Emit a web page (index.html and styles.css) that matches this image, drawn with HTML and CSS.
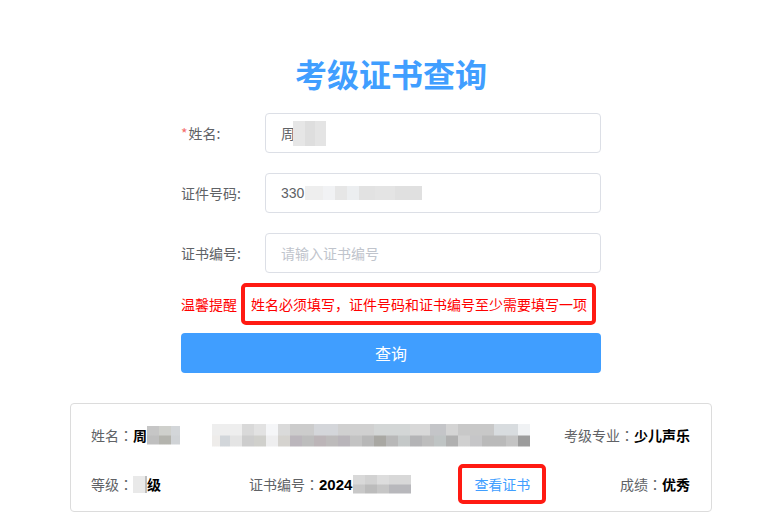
FILE: index.html
```html
<!DOCTYPE html>
<html lang="zh">
<head>
<meta charset="utf-8">
<link rel="stylesheet" href="styles.css">
</head>
<body>
<div class="page">
  <h1 class="title">考级证书查询</h1>
  <div class="form">
    <div class="row">
      <label class="label"><span class="req">*</span>姓名:</label>
      <div class="input"><span class="val">周</span><span class="mask mask-name"></span></div>
    </div>
    <div class="row">
      <label class="label">证件号码:</label>
      <div class="input"><span class="val">330</span><span class="mask mask-id"></span></div>
    </div>
    <div class="row">
      <label class="label">证书编号:</label>
      <div class="input"><span class="ph">请输入证书编号</span></div>
    </div>
    <div class="notice">
      <span class="notice-title">温馨提醒</span>
      <span class="notice-box">姓名必须填写，证件号码和证书编号至少需要填写一项</span>
    </div>
    <button class="btn">查询</button>
  </div>
  <div class="card">
    <div class="card-row r1">
      <div class="item"><span class="k">姓名<span class="colon" lang="zh-TW">：</span></span><b class="v">周</b><span class="mask mask-cname"></span></div>
      <span class="mask mask-long"></span>
      <div class="item push"><span class="k">考级专业<span class="colon" lang="zh-TW">：</span></span><b class="v">少儿声乐</b></div>
    </div>
    <div class="card-row r2">
      <div class="item"><span class="k">等级<span class="colon" lang="zh-TW">：</span></span><span class="mask mask-level"></span><b class="v">级</b></div>
      <div class="item cert"><span class="k">证书编号<span class="colon" lang="zh-TW">：</span></span><b class="v">2024</b><span class="mask mask-cert"></span></div>
      <a class="link">查看证书</a>
      <div class="item push"><span class="k">成绩<span class="colon" lang="zh-TW">：</span></span><b class="v">优秀</b></div>
    </div>
  </div>
</div>
</body>
</html>
```
FILE: styles.css
```css
* { box-sizing: border-box; }
html, body { margin: 0; padding: 0; background: #fff; }
body {
  font-family: "Noto Sans CJK SC", "Liberation Sans", sans-serif;
  font-size: 14px;
  color: #606266;
}
.page {
  padding-left: 18px;
  display: flex;
  flex-direction: column;
  align-items: center;
}
.title {
  margin: 52px 0 0;
  height: 48px;
  line-height: 42px;
  font-size: 32px;
  font-weight: 700;
  color: #409eff;
}
.form {
  width: 420px;
  margin-top: 13px;
  display: flex;
  flex-direction: column;
}
.row {
  display: flex;
  align-items: center;
  height: 40px;
  margin-bottom: 20px;
}
.label {
  width: 84px;
  color: #606266;
  font-size: 14px;
}
.req { color: #f56c6c; margin-right: 1px; }
.input {
  width: 336px;
  height: 40px;
  border: 1px solid #dcdfe6;
  border-radius: 4px;
  padding: 0 15px;
  display: flex;
  align-items: center;
  color: #606266;
  font-family: "Liberation Sans", "Noto Sans CJK SC", sans-serif;
}
.ph { color: #c0c4cc; font-family: "Noto Sans CJK SC", sans-serif; }
.mask { display: inline-block; }
.mask-name {
  width: 33px; height: 25px; margin-left: -2px;
  background: linear-gradient(to right, #e6e6e6 0 12px, #dedede 12px 22px, #e4e4e4 22px);
}
.mask-id {
  width: 117px; height: 14px; margin-left: 1px;
  background: linear-gradient(to right, #eeeeee 0 18px, #f1f2f4 18px 30px, #e6e6e6 30px 42px, #eceef0 42px 54px, #e2e2e2 54px 70px, #e4e4e4 70px 90px, #e0e0e0 90px);
}
.notice {
  display: flex;
  align-items: center;
  margin-top: -10px;
  height: 42px;
}
.notice-title {
  color: #f00;
  width: 60px;
  font-size: 14px;
}
.notice-box {
  height: 42px;
  width: 355px;
  border: 4px solid #ff1a12;
  border-radius: 5px;
  color: #f00;
  padding-left: 6px;
  display: flex;
  align-items: center;
  white-space: nowrap;
  font-size: 14px;
}
.btn {
  margin-top: 8px;
  width: 420px;
  height: 40px;
  border: none;
  border-radius: 4px;
  background: #409eff;
  color: #fff;
  font-family: "Noto Sans CJK SC", sans-serif;
  font-size: 16px;
  padding: 0;
}
.card {
  margin-top: 30px;
  width: 642px;
  height: 109px;
  border: 1px solid #dcdcdc;
  border-radius: 4px;
  padding: 20px 21px 8px 20px;
  display: flex;
  flex-direction: column;
}
.card-row {
  display: flex;
  align-items: center;
}
.r1 { height: 22px; }
.r2 { height: 40px; margin-top: 18px; }
.item { display: flex; align-items: center; white-space: nowrap; }
.k { color: #606266; }
.colon { font-family: "Noto Sans CJK TC", sans-serif; }
.v { color: #000; font-weight: 700; font-family: "Noto Sans CJK SC", "Liberation Sans", sans-serif; }
.cert .v { font-family: "Liberation Sans", sans-serif; font-size: 15px; }
.push { margin-left: auto; }
.mask-cname {
  width: 33px; height: 19px;
  background:
    linear-gradient(to right, #c6c6c6 0 12px, #cfd0cc 12px 24px, #d3d6d9 24px) top / 100% 50% no-repeat,
    linear-gradient(to right, #bfbfbf 0 12px, #b4b4ae 12px 24px, #d0d3d6 24px) bottom / 100% 50% no-repeat;
}
.mask-long {
  width: 318px; height: 23px; margin-left: 32px;
  background:
    linear-gradient(to right, #eeeeee 0 30px, #d9d9d9 30px 42px, #e2e2e2 42px 54px, #f5f6f8 54px 66px, #dadada 66px 78px, #cccccc 78px 102px, #d4d6da 102px 126px, #d0d0d0 126px 162px, #d3d6d6 162px 198px, #d8d8d8 198px 218px, #c4c5c8 218px 234px, #d4d4d4 234px 246px, #c8c8c8 246px 282px, #d8dcdf 282px 306px, #f0f2f4 306px) top / 100% 50% no-repeat,
    linear-gradient(to right, #eeecea 0 8px, #d2d6da 8px 18px, #e4e4e4 18px 30px, #cdcdcd 30px 42px, #d0d0cc 42px 54px, #eeeeef 54px 66px, #d5d3cf 66px 78px, #bbb6bc 78px 90px, #bdbdbd 90px 102px, #bcb5b8 102px 114px, #bdbbbb 114px 126px, #b9b5ba 126px 138px, #c3c3c3 138px 150px, #b8b8b8 150px 162px, #a9a8a3 162px 174px, #b8b8b8 174px 186px, #c4c8c8 186px 198px, #b4b4b6 198px 210px, #bdbdbd 210px 222px, #bfc4c4 222px 234px, #b0b0b0 234px 246px, #d0d0d0 246px 258px, #c6c6c8 258px 270px, #bababa 270px 294px, #c4c4c4 294px 306px, #9c9c9c 306px) bottom / 100% 50% no-repeat;
}
.mask-level {
  width: 15px; height: 17px;
  background: linear-gradient(to right, #e9e9e9 0 12px, #bdbdbd 12px);
}
.r2 .item:first-child { width: 70px; }
.cert { margin-left: 88px; }
.mask-cert {
  width: 58px; height: 19px; margin-left: 1px;
  background:
    linear-gradient(to right, #d9d9d9 0 12px, #d2d2d2 12px 24px, #dddddd 24px 36px, #d8d8d8 36px) top / 100% 50% no-repeat,
    linear-gradient(to right, #c8c8c8 0 12px, #bcbcbc 12px 24px, #c6c6c6 24px 36px, #b8b8bc 36px) bottom / 100% 50% no-repeat;
}
.link {
  margin-left: 47px;
  width: 88px;
  height: 40px;
  border: 4px solid #ff1a12;
  border-radius: 5px;
  color: #409eff;
  display: flex;
  align-items: center;
  justify-content: center;
  cursor: pointer;
}
```
